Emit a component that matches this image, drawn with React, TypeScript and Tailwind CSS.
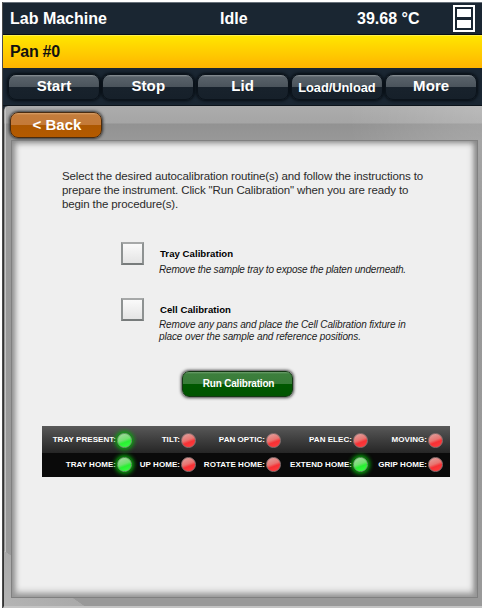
import React from "react";

const sans = "font-['Liberation_Sans',Arial,sans-serif]";

function NavButton({ label, small }: { label: string; small?: boolean }) {
  return (
    <button
      className={
        "flex h-[26px] w-[92px] shrink-0 items-center justify-center whitespace-nowrap rounded-[8px] border border-[#0b131b] bg-[linear-gradient(to_bottom,#8d9499_0,#59626a_2px,#4b545c_48%,#18222c_50%,#16202a_100%)] font-bold text-white shadow-[0_0_3px_1px_#060c12] " +
        (small ? "pt-[2px] text-[12.8px]" : "text-[15px] tracking-[0.1px]")
      }
    >
      {label}
    </button>
  );
}

function CheckItem({
  title,
  lines,
  top,
  gap,
}: {
  title: string;
  lines: { text: string; cls: string }[];
  top: string;
  gap: string;
}) {
  return (
    <div className={"flex items-start " + top}>
      <span className="h-[23px] w-[23px] shrink-0 border-2 border-t-[#a6a8a8] border-r-[#8e9292] border-b-[#777b7b] border-l-[#8e9292] bg-linear-to-b from-[#fafafa] to-[#e4e4e4]" />
      <div className="ml-[16px] pt-[5px]">
        <div className="text-[9.6px] leading-[13px] font-bold tracking-[0.04px] text-black">{title}</div>
        <div className={"-ml-px " + gap}>
          {lines.map((l) => (
            <div key={l.text} className={"text-[10px] leading-[12px] whitespace-nowrap text-[#1c1c1c] italic " + l.cls}>
              {l.text}
            </div>
          ))}
        </div>
      </div>
    </div>
  );
}

function Led({ on }: { on?: boolean }) {
  return (
    <span
      className={
        "h-[15px] w-[15px] shrink-0 rounded-full border " +
        (on
          ? "border-[#69b369] bg-[linear-gradient(160deg,#a9d8a4_0%,#72e070_45%,#28f032_62%,#3cff45_100%)] shadow-[0_0_4px_2px_#07a80b]"
          : "border-[#8d7070] bg-[linear-gradient(160deg,#dfa6a2_0%,#e87470_45%,#f73034_62%,#ff4040_100%)]")
      }
    />
  );
}

function Status({ label, on, w }: { label: string; on?: boolean; w: string }) {
  return (
    <div
      className={
        "flex shrink-0 items-center justify-end gap-px text-[8px] font-bold tracking-[0.05px] whitespace-nowrap text-white " +
        w
      }
    >
      <span>{label}</span>
      <Led on={on} />
    </div>
  );
}

export default function App() {
  return (
    <div className={"h-[610px] w-[484px] overflow-hidden bg-white pt-[2px] pr-[2px] pl-[2px] " + sans}>
      <div className="flex h-[606px] w-[480px] flex-col border-l border-[#4c4c4c] bg-[#1a2632]">
        <header className="flex h-[33px] shrink-0 items-center border-t border-b border-t-[#68717a] border-b-[#080e14] pl-[7px] text-[16px] font-bold text-white">
          <span className="w-[210px]">Lab Machine</span>
          <span className="w-[137px]">Idle</span>
          <span>39.68 °C</span>
          <span className="ml-[34px] flex h-[27px] w-[22px] flex-col items-center justify-center gap-[3px] border-2 border-white">
            <span className="h-[8px] w-[14px] bg-white" />
            <span className="h-[8px] w-[14px] bg-white" />
          </span>
        </header>
        <div className="flex h-[33px] shrink-0 items-center border-t border-t-[#fff04a] bg-linear-to-b from-[#ffe600] to-[#ffb400] pl-[7px] text-[16px] font-bold tracking-[-0.3px] text-[#111]">
          Pan #0
        </div>
        <nav className="flex h-[38px] shrink-0 items-center gap-[2.3px] border-b border-[#0c131a] pl-[5px]">
          <NavButton label="Start" />
          <NavButton label="Stop" />
          <NavButton label="Lid" />
          <NavButton label="Load/Unload" small />
          <NavButton label="More" />
        </nav>
        <main className="flex h-[502px] flex-col rounded-tl-[5px] border-b-2 border-l border-b-[#c4c4c4] border-l-[#333] bg-[linear-gradient(to_top_right,#b4b4b4_0%,#aaaaaa_50%,transparent_50.5%),linear-gradient(to_right,#c4c4c4_0,#c4c4c4_100%),radial-gradient(ellipse_at_top_right,#ffffff2c_0%,#ffffff00_68%),linear-gradient(to_bottom,#acacac_0,#a5a5a5_17px,#929292_18px,#989898_34px,#999_100%)] bg-[size:80px_55px,1px_100%,140px_150px,100%_100%] bg-[position:left_bottom,1px_0,right_top,0_0] bg-no-repeat pr-[5px] pl-[7px]">
          <button className="mt-[6px] ml-[-1px] flex h-[26px] w-[92px] shrink-0 items-center justify-center rounded-[8px] border border-[#4a2c10] bg-[linear-gradient(to_bottom,#dba36c_0,#c47d3c_2px,#c47a38_48%,#ad5800_50%,#b45a00_100%)] text-[15px] font-bold text-white shadow-[0_0_3px_1px_#333]">
            <span className="ml-[2px]">&lt; Back</span>
          </button>
          <section className="mt-[2px] h-[458px] w-[467px] shrink-0 border border-[#808080] bg-[#efefef] px-[50px] pt-[28px] shadow-[inset_0_-5px_7px_-1px_#999,inset_5px_0_7px_-3px_#888,inset_-5px_0_7px_-3px_#777,inset_0_2px_6px_0_#999]">
            <div className="text-[11.5px] leading-[14px] tracking-[-0.12px] whitespace-nowrap text-[#2b2b2b]">
              <div>Select the desired autocalibration routine(s) and follow the instructions to</div>
              <div>prepare the instrument. Click "Run Calibration" when you are ready to</div>
              <div>begin the procedure(s).</div>
            </div>
            <div className="ml-[59px]">
              <CheckItem
                top="mt-[31px]"
                gap="pt-[4px]"
                title="Tray Calibration"
                lines={[{ text: "Remove the sample tray to expose the platen underneath.", cls: "tracking-[-0.19px]" }]}
              />
              <CheckItem
                top="mt-[22px]"
                gap="pt-[3px]"
                title="Cell Calibration"
                lines={[
                  { text: "Remove any pans and place the Cell Calibration fixture in", cls: "tracking-[-0.14px]" },
                  { text: "place over the sample and reference positions.", cls: "tracking-[-0.12px]" },
                ]}
              />
            </div>
            <button className="mt-[28px] ml-[120px] flex h-[26px] w-[111px] items-center justify-center rounded-[7px] border border-[#143814] bg-[linear-gradient(to_bottom,#6fa06f_0,#3d7f3d_2px,#387c38_48%,#005800_50%,#005400_100%)] pb-px text-[10px] font-bold tracking-[-0.2px] text-white shadow-[0_0_3px_1px_#444]">
              <span className="ml-[2px]">Run Calibration</span>
            </button>
            <div className="mt-[29px] -ml-[20px] w-[408px]">
              <div className="flex h-[27px] items-center bg-linear-to-b from-[#595959] to-[#262626] pt-px">
                <Status label="TRAY PRESENT:" on w="w-[90px]" />
                <Status label="TILT:" w="w-[64px]" />
                <Status label="PAN OPTIC:" w="w-[85px]" />
                <Status label="PAN ELEC:" w="w-[87px]" />
                <Status label="MOVING:" w="w-[75px]" />
              </div>
              <div className="flex h-[24px] items-center bg-[#0a0a0a] pb-px">
                <Status label="TRAY HOME:" on w="w-[90px]" />
                <Status label="UP HOME:" w="w-[64px]" />
                <Status label="ROTATE HOME:" w="w-[85px]" />
                <Status label="EXTEND HOME:" on w="w-[87px]" />
                <Status label="GRIP HOME:" w="w-[75px]" />
              </div>
            </div>
          </section>
        </main>
      </div>
    </div>
  );
}
